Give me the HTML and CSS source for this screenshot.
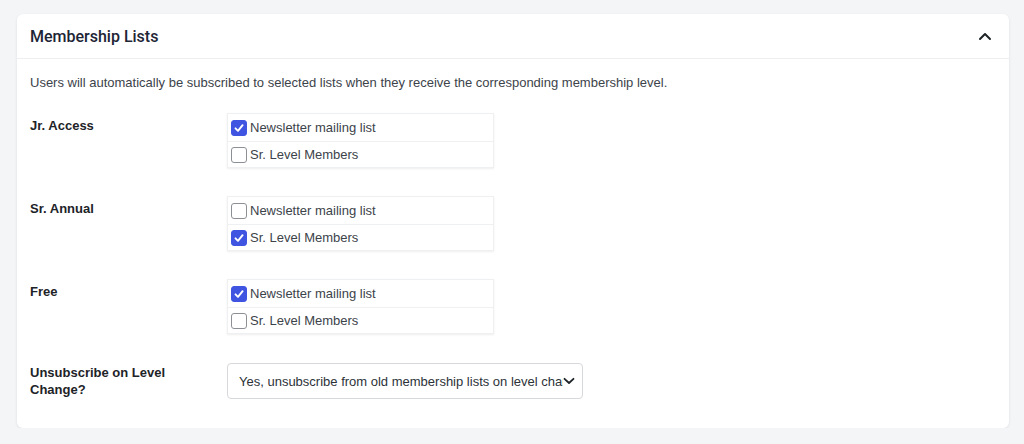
FILE: index.html
```html
<!DOCTYPE html>
<html lang="en">
<head>
<meta charset="utf-8">
<title>Membership Lists</title>
<link rel="stylesheet" href="styles.css">
</head>
<body>
<section class="card">
  <header class="card-header">
    <h2 class="card-title">Membership Lists</h2>
    <svg class="toggle" width="14" height="10" viewBox="0 0 14 10"><path d="M2 8 L7 3 L12 8" fill="none" stroke="#1d2327" stroke-width="2" stroke-linecap="round" stroke-linejoin="round"/></svg>
  </header>
  <div class="card-body">
    <p class="desc">Users will automatically be subscribed to selected lists when they receive the corresponding membership level.</p>

    <div class="row">
      <div class="label">Jr. Access</div>
      <div class="checklist">
        <label class="item"><span class="cb checked"><svg width="12" height="12" viewBox="0 0 12 12"><path d="M2.5 6.3 L5 8.8 L9.6 3.2" fill="none" stroke="#fff" stroke-width="1.9" stroke-linecap="round" stroke-linejoin="round"/></svg></span>Newsletter mailing list</label>
        <label class="item"><span class="cb"></span>Sr. Level Members</label>
      </div>
    </div>

    <div class="row">
      <div class="label">Sr. Annual</div>
      <div class="checklist">
        <label class="item"><span class="cb"></span>Newsletter mailing list</label>
        <label class="item"><span class="cb checked"><svg width="12" height="12" viewBox="0 0 12 12"><path d="M2.5 6.3 L5 8.8 L9.6 3.2" fill="none" stroke="#fff" stroke-width="1.9" stroke-linecap="round" stroke-linejoin="round"/></svg></span>Sr. Level Members</label>
      </div>
    </div>

    <div class="row">
      <div class="label">Free</div>
      <div class="checklist">
        <label class="item"><span class="cb checked"><svg width="12" height="12" viewBox="0 0 12 12"><path d="M2.5 6.3 L5 8.8 L9.6 3.2" fill="none" stroke="#fff" stroke-width="1.9" stroke-linecap="round" stroke-linejoin="round"/></svg></span>Newsletter mailing list</label>
        <label class="item"><span class="cb"></span>Sr. Level Members</label>
      </div>
    </div>

    <div class="row row-select">
      <div class="label label-wrap">Unsubscribe on Level Change?</div>
      <div class="select">
        <span class="select-text">Yes, unsubscribe from old membership lists on level change</span>
        <svg class="select-arrow" width="12" height="8" viewBox="0 0 12 8"><path d="M1.5 1.8 L6 6 L10.5 1.8" fill="none" stroke="#1d2327" stroke-width="1.8" stroke-linecap="round" stroke-linejoin="round"/></svg>
      </div>
    </div>
  </div>
</section>
</body>
</html>
```

FILE: styles.css
```css
* { box-sizing: border-box; }
html, body { margin: 0; }
body {
  background: #f4f5f7;
  font-family: "Liberation Sans", Arial, sans-serif;
  color: #1d2327;
  padding: 14px 15px 0 17px;
}
.card {
  width: 992px;
  background: #fff;
  border-radius: 6px;
  box-shadow: 0 1px 3px rgba(15, 23, 42, 0.09);
}
.card-header {
  height: 45px;
  display: flex;
  align-items: center;
  justify-content: space-between;
  padding: 0 17px 0 13px;
  border-bottom: 1px solid #eceef1;
}
.card-title {
  margin: 0;
  font-family: Roboto, "Liberation Sans", sans-serif;
  font-size: 16px;
  font-weight: 500;
  color: #1e2535;
}
.toggle { display: block; }
.card-body {
  padding: 15px 13px 29px;
}
.desc {
  margin: 0 0 21px;
  font-size: 13px;
  line-height: 18px;
  color: #3c434a;
}
.row {
  display: flex;
  align-items: flex-start;
  margin-bottom: 28px;
}
.row-select { margin-bottom: 0; margin-top: 29px; }
.label {
  width: 197px;
  flex: none;
  font-size: 13px;
  font-weight: bold;
  line-height: 17px;
  padding-top: 4px;
  color: #1d2327;
}
.label-wrap { width: 150px; margin-right: 47px; padding-top: 1px; }
.checklist {
  width: 267px;
  border: 1px solid #eef0f2;
  box-shadow: 0 1px 2px rgba(0, 0, 0, 0.07);
  background: #fff;
}
.item {
  display: flex;
  align-items: center;
  height: 27px;
  padding-left: 3px;
  font-size: 13px;
  color: #3c434a;
}
.item + .item { border-top: 1px solid #eef0f2; height: 26px; }
.cb {
  width: 16px;
  height: 16px;
  flex: none;
  border: 1px solid #8c8f94;
  border-radius: 3px;
  margin-right: 3px;
  display: flex;
  align-items: center;
  justify-content: center;
  background: #fff;
}
.cb.checked {
  background: #3f55e2;
  border-color: #3f55e2;
}
.cb svg { display: block; }
.select {
  width: 356px;
  height: 36px;
  border: 1px solid #d6d8dc;
  border-radius: 4px;
  display: flex;
  align-items: center;
  padding: 0 7px 0 11px;
  background: #fff;
}
.select-text {
  flex: 1;
  min-width: 0;
  overflow: hidden;
  white-space: nowrap;
  font-size: 13px;
  color: #2c3338;
}
.select-arrow { flex: none; display: block; }
```
